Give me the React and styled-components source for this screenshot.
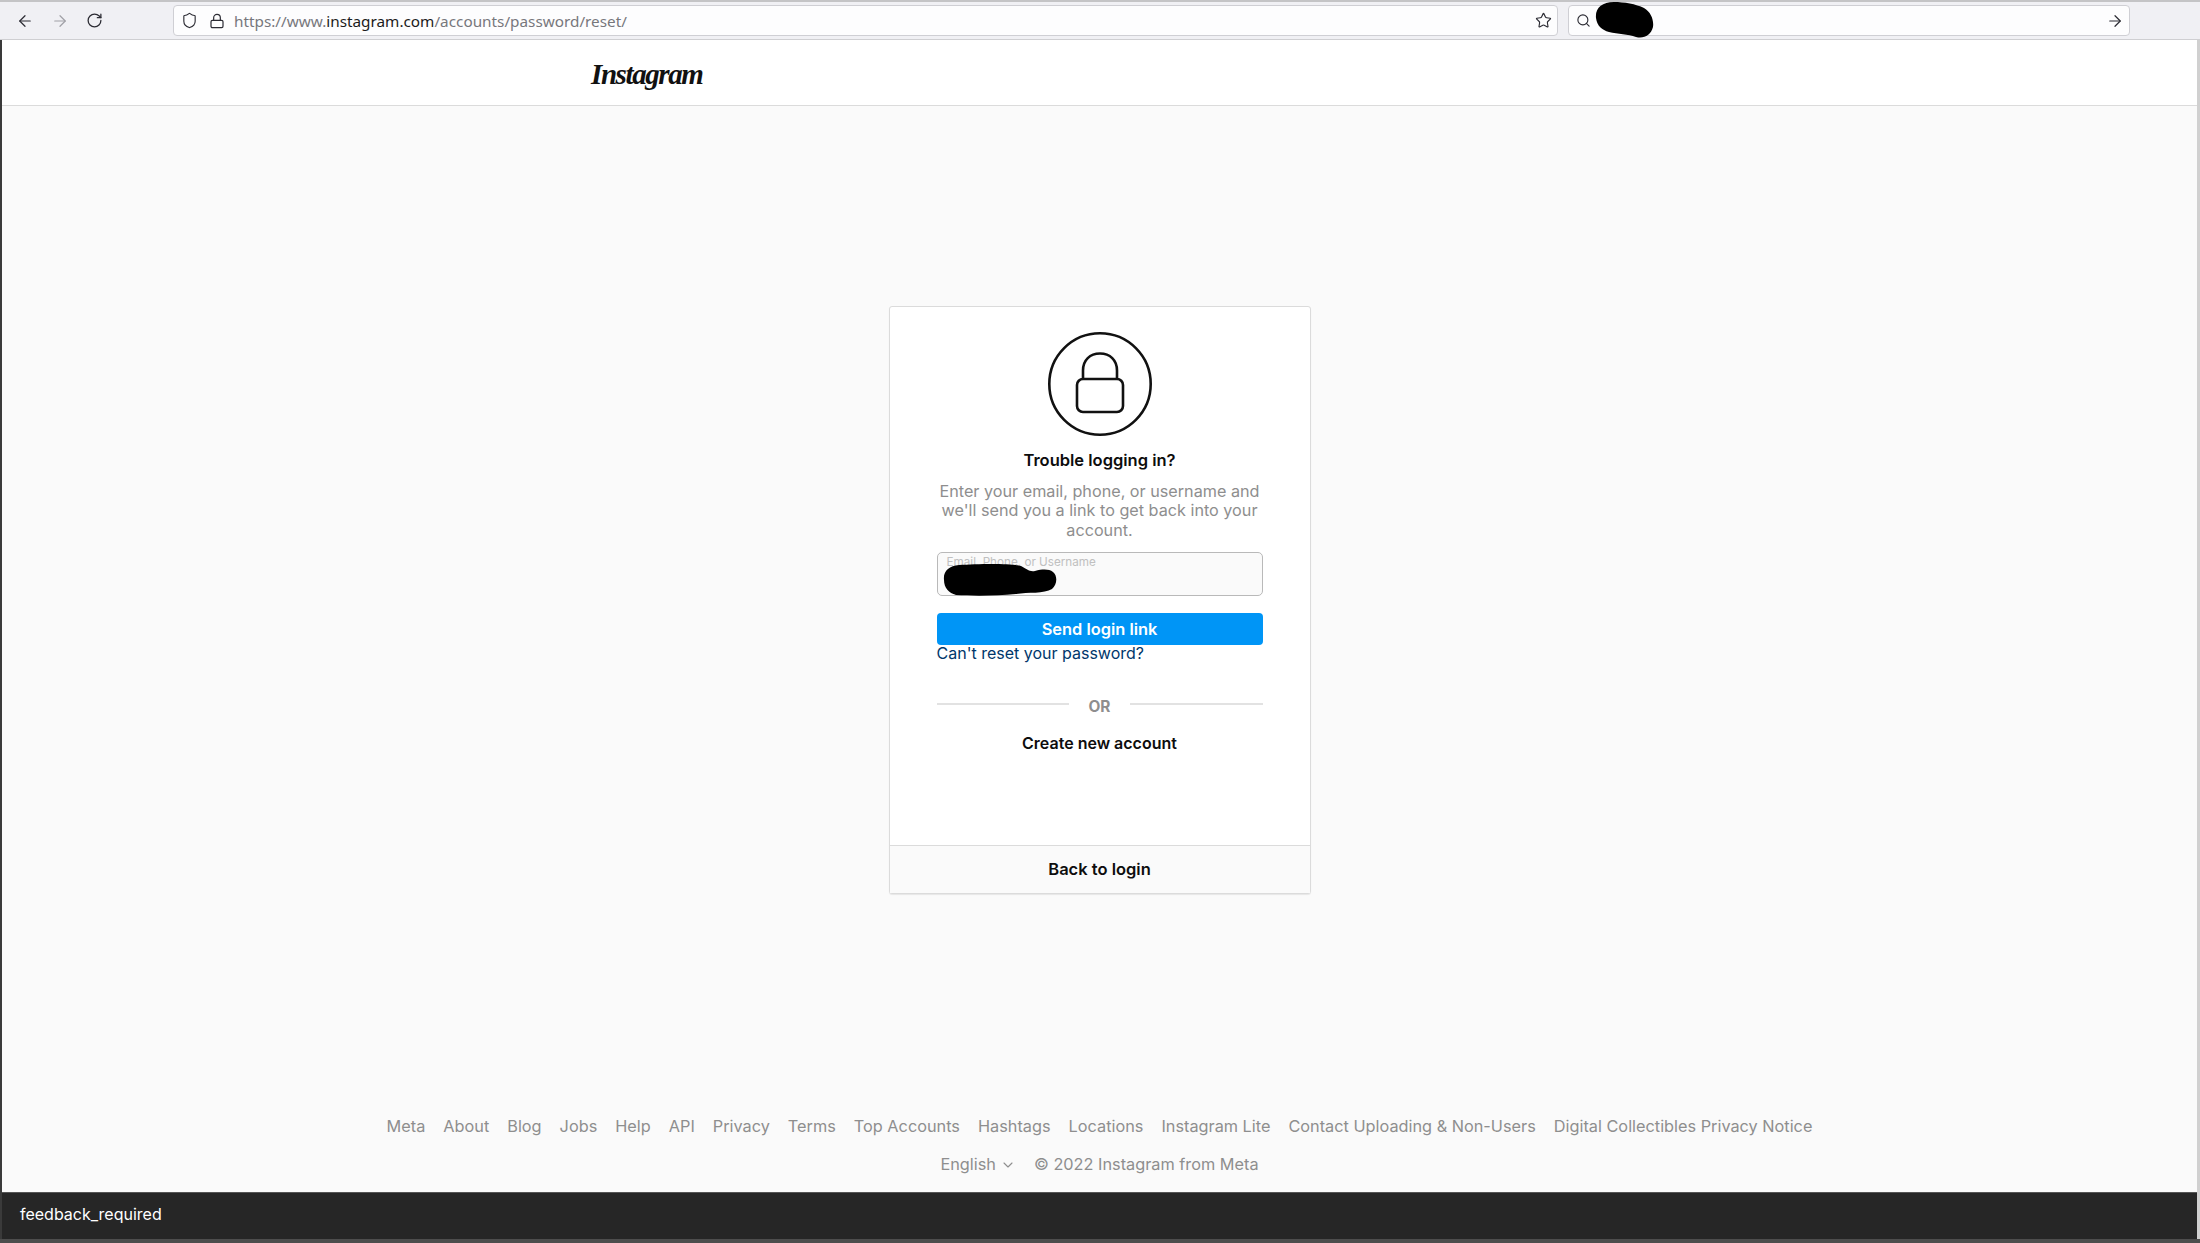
import React from "react";
import styled, { createGlobalStyle } from "styled-components";
import { ArrowLeft, ArrowRight, RotateCw, Shield, Lock, Star, Search, ChevronDown } from "lucide-react";

const GlobalStyle = createGlobalStyle`
  html, body {
    margin: 0;
    padding: 0;
    height: 100%;
    overflow: hidden;
    background: #fafafa;
    font-family: Inter, "Liberation Sans", sans-serif;
  }
  * {
    box-sizing: border-box;
  }
`;

const Screen = styled.div`
  display: flex;
  flex-direction: column;
  width: 2200px;
  height: 1243px;
`;

const Toolbar = styled.div`
  position: relative;
  display: flex;
  align-items: center;
  height: 40px;
  padding: 2px 70px 2px 0;
  background: #f0f0f4;
  border-top: 2px solid #c4c4c6;
  border-bottom: 1px solid #cfcfd2;
`;

const NavButtons = styled.div`
  display: flex;
  align-items: center;
  gap: 17px;
  width: 173px;
  padding-left: 16px;
  color: #2b2b33;
`;

const UrlBar = styled.div`
  display: flex;
  align-items: center;
  flex: ${(props) => props.grow};
  height: 31px;
  margin-right: ${(props) => props.gap || 0}px;
  padding: 0 5px 0 7px;
  background: #fdfdfe;
  border: 1px solid #cfcfd4;
  border-radius: 4px;
  color: #2b2b33;
`;

const LockSlot = styled.span`
  display: flex;
  margin: 0 9px 0 11px;
`;

const UrlText = styled.span`
  flex: 1;
  font-family: "Noto Sans", sans-serif;
  font-size: 15.3px;
  color: #77777c;
  b {
    font-weight: 400;
    color: #1b1b20;
  }
`;

const Filler = styled.span`
  flex: 1;
`;

const Redaction = styled.svg`
  position: absolute;
  left: ${(props) => props.x}px;
  top: ${(props) => props.y}px;
`;

const Viewport = styled.div`
  flex: 1;
  display: flex;
  flex-direction: column;
  border-left: 2px solid #3a3a3a;
  border-right: 3px solid #d0d0d0;
  background: #fafafa;
`;

const TopBar = styled.header`
  display: flex;
  align-items: center;
  height: 66px;
  padding: 4px 0 0 589px;
  background: #fff;
  border-bottom: 1px solid #dbdbdb;
`;

const Logo = styled.span`
  font-family: "Liberation Serif", serif;
  font-style: italic;
  font-size: 29px;
  font-weight: 700;
  letter-spacing: -1.4px;
  color: #111;
`;

const Main = styled.main`
  flex: 1;
  display: flex;
  justify-content: center;
  padding-top: 200px;
`;

const Card = styled.section`
  display: flex;
  flex-direction: column;
  align-items: center;
  width: 422px;
  height: 588px;
  background: #fff;
  border: 1px solid #dbdbdb;
  border-radius: 3px;
  box-shadow: 0 1px 1px rgba(0, 0, 0, 0.08);
`;

const CardBody = styled.div`
  flex: 1;
  display: flex;
  flex-direction: column;
  align-items: center;
  width: 100%;
  padding: 25px 47px 0;
`;

const LockIcon = styled.svg`
  display: block;
  margin-bottom: 15px;
`;

const Heading = styled.h2`
  margin: 0;
  font-size: 16.5px;
  line-height: 19.8px;
  font-weight: 600;
  color: #0d0d0d;
`;

const Description = styled.p`
  margin: 11px 0 0;
  font-size: 16.2px;
  line-height: 19.6px;
  text-align: center;
  color: #8e8e8e;
`;

const Field = styled.div`
  position: relative;
  width: 100%;
  height: 44px;
  margin-top: 11px;
  padding: 2px 9px;
  background: #fafafa;
  border: 1px solid #b9b9b9;
  border-radius: 5px;
`;

const FieldLabel = styled.span`
  display: block;
  font-size: 11.7px;
  line-height: 14px;
  color: #c0c0c0;
`;

const SendButton = styled.button`
  display: block;
  width: 100%;
  height: 32px;
  margin-top: 17px;
  padding: 0;
  background: #0095f6;
  border: 0;
  border-radius: 4px;
  font-family: inherit;
  font-size: 16.4px;
  font-weight: 600;
  color: #fff;
`;

const HelpLink = styled.a`
  align-self: flex-start;
  margin-top: -1px;
  font-size: 16px;
  line-height: 18px;
  color: #00376b;
`;

const Divider = styled.div`
  display: flex;
  align-items: center;
  gap: 20px;
  width: 100%;
  margin-top: 36px;
`;

const DividerLine = styled.span`
  flex: 1;
  height: 2px;
  margin-top: -6px;
  background: #e2e2e2;
`;

const DividerText = styled.span`
  font-size: 15.4px;
  line-height: 18px;
  font-weight: 700;
  color: #8e8e8e;
`;

const CreateLink = styled.a`
  margin-top: 18px;
  font-size: 16px;
  line-height: 19px;
  font-weight: 600;
  color: #0d0d0d;
`;

const BackLink = styled.a`
  display: flex;
  align-items: center;
  justify-content: center;
  width: 100%;
  height: 48px;
  padding-bottom: 2px;
  background: #fafafa;
  border-top: 1px solid #dbdbdb;
  font-size: 16.5px;
  font-weight: 600;
  color: #0d0d0d;
`;

const Footer = styled.footer`
  display: flex;
  flex-direction: column;
  align-items: center;
  gap: 19px;
  padding-bottom: 18px;
  font-size: 16.3px;
  line-height: 19px;
  color: #8e8e8e;
`;

const FooterRow = styled.nav`
  display: flex;
  align-items: center;
  gap: ${(props) => props.gap}px;
`;

const Language = styled.span`
  display: flex;
  align-items: center;
  gap: 4px;
`;

const Snackbar = styled.div`
  display: flex;
  align-items: center;
  height: 47px;
  padding: 0 0 5px 18px;
  background: #262626;
  border-top: 1px solid #555;
  font-size: 16px;
  color: #fff;
`;

const Desktop = styled.div`
  height: 4px;
  background: #4d4d4d;
`;

const footerLinks = [
  "Meta",
  "About",
  "Blog",
  "Jobs",
  "Help",
  "API",
  "Privacy",
  "Terms",
  "Top Accounts",
  "Hashtags",
  "Locations",
  "Instagram Lite",
  "Contact Uploading & Non-Users",
  "Digital Collectibles Privacy Notice",
];

const App = () => (
  <Screen>
    <GlobalStyle />
    <Toolbar>
      <NavButtons>
        <ArrowLeft size={18} strokeWidth={1.6} />
        <ArrowRight size={18} strokeWidth={1.6} color="#a0a0a6" />
        <RotateCw size={17} strokeWidth={1.8} />
      </NavButtons>
      <UrlBar grow="0 0 1385px" gap={10}>
        <Shield size={17} strokeWidth={1.6} />
        <LockSlot>
          <Lock size={16} strokeWidth={1.8} />
        </LockSlot>
        <UrlText>
          https://www.<b>instagram.com</b>/accounts/password/reset/
        </UrlText>
        <Star size={17} strokeWidth={1.6} />
      </UrlBar>
      <UrlBar grow="1">
        <Search size={15} strokeWidth={1.8} />
        <Filler />
        <ArrowRight size={18} strokeWidth={1.6} />
      </UrlBar>
      <Redaction x={1594} y={0} width="60" height="36" viewBox="0 0 60 36">
        <path d="M2 16C1 6 8 0 20 0c10 0 22 2 30 6 7 4 10 12 9 19-2 8-9 12-17 10-8-3-18-3-27-5C8 28 3 24 2 16z" fill="#000" />
      </Redaction>
    </Toolbar>
    <Viewport>
      <TopBar>
        <Logo>Instagram</Logo>
      </TopBar>
      <Main>
        <Card>
          <CardBody>
            <LockIcon width="104" height="104" viewBox="0 0 104 104" fill="none" stroke="#111" strokeWidth="2.6">
              <circle cx="52" cy="52" r="50.7" />
              <path d="M35 47V38.5C35 28 42 21.5 52 21.5S69 28 69 38.5V47" />
              <rect x="29" y="47" width="46" height="33" rx="6" />
            </LockIcon>
            <Heading>Trouble logging in?</Heading>
            <Description>
              Enter your email, phone, or username and we'll send you a link to get back into your account.
            </Description>
            <Field>
              <FieldLabel>Email, Phone, or Username</FieldLabel>
              <Redaction x={5} y={11} width="114" height="32" viewBox="0 0 114 32">
                <path d="M1 16C0 7 6 2 16 1c18-1 50-2 62 1 6 3 8 6 14 5 8-2 14-2 18 1 5 4 4 13-1 17-8 5-24 3-36 5-20 2-44 2-60 1C6 29 1 24 1 16z" fill="#000" />
              </Redaction>
            </Field>
            <SendButton>Send login link</SendButton>
            <HelpLink>Can't reset your password?</HelpLink>
            <Divider>
              <DividerLine />
              <DividerText>OR</DividerText>
              <DividerLine />
            </Divider>
            <CreateLink>Create new account</CreateLink>
          </CardBody>
          <BackLink>Back to login</BackLink>
        </Card>
      </Main>
      <Footer>
        <FooterRow gap={18}>
          {footerLinks.map((link) => (
            <span key={link}>{link}</span>
          ))}
        </FooterRow>
        <FooterRow gap={18}>
          <Language>
            English <ChevronDown size={16} strokeWidth={1.6} />
          </Language>
          <span>© 2022 Instagram from Meta</span>
        </FooterRow>
      </Footer>
      <Snackbar>feedback_required</Snackbar>
    </Viewport>
    <Desktop />
  </Screen>
);

export default App;
